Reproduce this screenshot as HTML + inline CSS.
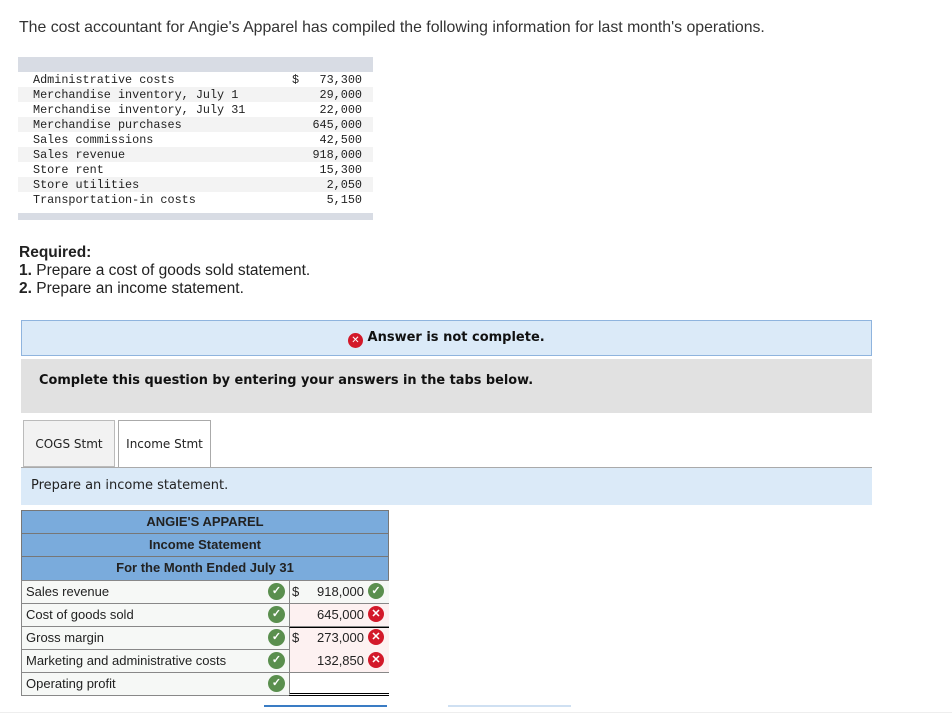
<!DOCTYPE html>
<html><head><meta charset="utf-8"><style>
body{margin:0;background:#fff;font-family:"Liberation Sans",Arial,sans-serif;color:#222;width:952px;height:720px;overflow:hidden;position:relative}
.a{position:absolute}
.mono{font-family:"Liberation Mono",monospace;font-size:11.8px;color:#222}
.dr{position:absolute;left:18px;width:355px;height:15px;line-height:16px}
.dr span{position:absolute;left:15px}
.dr b{position:absolute;right:11px;font-weight:normal}
.tr{position:absolute;left:21px;width:368px;border:1px solid #777;box-sizing:border-box}
.hd{background:#7aabdc;text-align:center;font-size:13px;font-weight:bold;color:#222;height:24px;line-height:22px}
.row{position:absolute;left:21px;width:368px;height:24px;border:1px solid #888;box-sizing:border-box;background:#f6f8f6;font-size:13px;line-height:21px}
.ck{position:absolute;width:17px;height:17px;border-radius:50%;background:#5a8f4e;color:#fff;font-size:11px;line-height:17px;text-align:center;font-weight:bold}
.x{background:#d3192a}
</style></head><body>
<div class="a" style="left:19px;top:19px;font-size:15.85px;color:#333">The cost accountant for Angie's Apparel has compiled the following information for last month's operations.</div>
<div class="a" style="left:18px;top:57px;width:355px;height:15px;background:#d8dce4"></div>
<div class="mono">
<div class="dr" style="top:72px"><span>Administrative costs</span><i style="position:absolute;left:274px;font-style:normal">$</i><b>73,300</b></div>
<div class="dr" style="top:87px;background:#f3f3f3"><span>Merchandise inventory, July 1</span><b>29,000</b></div>
<div class="dr" style="top:102px"><span>Merchandise inventory, July 31</span><b>22,000</b></div>
<div class="dr" style="top:117px;background:#f3f3f3"><span>Merchandise purchases</span><b>645,000</b></div>
<div class="dr" style="top:132px"><span>Sales commissions</span><b>42,500</b></div>
<div class="dr" style="top:147px;background:#f3f3f3"><span>Sales revenue</span><b>918,000</b></div>
<div class="dr" style="top:162px"><span>Store rent</span><b>15,300</b></div>
<div class="dr" style="top:177px;background:#f3f3f3"><span>Store utilities</span><b>2,050</b></div>
<div class="dr" style="top:192px"><span>Transportation-in costs</span><b>5,150</b></div>
</div>
<div class="a" style="left:18px;top:213px;width:355px;height:7px;background:#d8dce4"></div>
<div class="a" style="left:19px;top:244px;font-size:15.5px;line-height:18px;color:#222"><b>Required:</b><br><b>1.</b> Prepare a cost of goods sold statement.<br><b>2.</b> Prepare an income statement.</div>
<div class="a" style="left:21px;top:320px;width:849px;height:34px;background:#dbeaf8;border:1px solid #8fb4de"></div>
<div class="a" style="left:348px;top:330px;font-family:'DejaVu Sans',sans-serif;font-size:13px;font-weight:bold;color:#111"><span class="ck x" style="position:relative;display:inline-block;width:15px;height:15px;line-height:15px;font-size:10px;vertical-align:-2px">✕</span> Answer is not complete.</div>
<div class="a" style="left:21px;top:359px;width:851px;height:54px;background:#e1e1e1"></div>
<div class="a" style="left:39px;top:373px;font-family:'DejaVu Sans',sans-serif;font-size:12.9px;font-weight:bold;color:#111">Complete this question by entering your answers in the tabs below.</div>
<div class="a" style="left:23px;top:420px;width:92px;height:47px;background:#f2f2f2;border:1px solid #bbb;box-sizing:border-box;font-family:'DejaVu Sans',sans-serif;font-size:12px;line-height:47px;text-align:center">COGS Stmt</div>
<div class="a" style="left:118px;top:420px;width:93px;height:48px;background:#fff;border:1px solid #aaa;border-bottom:none;box-sizing:border-box;font-family:'DejaVu Sans',sans-serif;font-size:12px;line-height:47px;text-align:center">Income Stmt</div>
<div class="a" style="left:21px;top:467px;width:851px;height:37px;background:#dbeaf8;border-top:1px solid #aaa"></div>
<div class="a" style="left:31px;top:478px;font-family:'DejaVu Sans',sans-serif;font-size:13px;color:#222">Prepare an income statement.</div>
<div class="tr hd" style="top:510px">ANGIE'S APPAREL</div>
<div class="tr hd" style="top:533px">Income Statement</div>
<div class="tr hd" style="top:556px;height:25px">For the Month Ended July 31</div>
<div class="row" style="top:580px"><span style="margin-left:4px">Sales revenue</span></div>
<div class="row" style="top:603px"><span style="margin-left:4px">Cost of goods sold</span></div>
<div class="row" style="top:626px"><span style="margin-left:4px">Gross margin</span></div>
<div class="row" style="top:649px"><span style="margin-left:4px">Marketing and administrative costs</span></div>
<div class="row" style="top:672px"><span style="margin-left:4px">Operating profit</span></div>
<div class="a" style="left:289px;top:581px;width:99px;height:22px;background:#f6f8f6;border-left:1px solid #888"></div>
<div class="a" style="left:289px;top:604px;width:99px;height:22px;background:#fdf1f1;border-left:1px solid #888"></div>
<div class="a" style="left:289px;top:627px;width:99px;height:22px;background:#fdf1f1;border-left:1px solid #888;border-top:1px solid #000"></div>
<div class="a" style="left:289px;top:650px;width:99px;height:22px;background:#fdf1f1;border-left:1px solid #888"></div>
<div class="a" style="left:289px;top:673px;width:99px;height:20px;background:#fff;border-left:1px solid #888;border-bottom:3px double #000"></div>
<div class="ck" style="left:268px;top:583px">✓</div>
<div class="ck" style="left:268px;top:606px">✓</div>
<div class="ck" style="left:268px;top:629px">✓</div>
<div class="ck" style="left:268px;top:652px">✓</div>
<div class="ck" style="left:268px;top:675px">✓</div>
<div class="a" style="left:292px;top:584px;font-size:13px">$</div>
<div class="a" style="left:292px;top:630px;font-size:13px">$</div>
<div class="a" style="right:588px;top:584px;font-size:13px">918,000</div>
<div class="a" style="right:588px;top:607px;font-size:13px">645,000</div>
<div class="a" style="right:588px;top:630px;font-size:13px">273,000</div>
<div class="a" style="right:588px;top:653px;font-size:13px">132,850</div>
<div class="ck" style="left:368px;top:583px;width:16px;height:16px;line-height:16px">✓</div>
<div class="ck x" style="left:368px;top:606px;width:16px;height:16px;line-height:16px">✕</div>
<div class="ck x" style="left:368px;top:629px;width:16px;height:16px;line-height:16px">✕</div>
<div class="ck x" style="left:368px;top:652px;width:16px;height:16px;line-height:16px">✕</div>
<div class="a" style="left:264px;top:705px;width:123px;height:2px;background:#3a7cc4"></div>
<div class="a" style="left:448px;top:705px;width:123px;height:2px;background:#cfe0f2"></div>
<div class="a" style="left:0;top:712px;width:952px;height:1px;background:#eee"></div>
</body></html>
